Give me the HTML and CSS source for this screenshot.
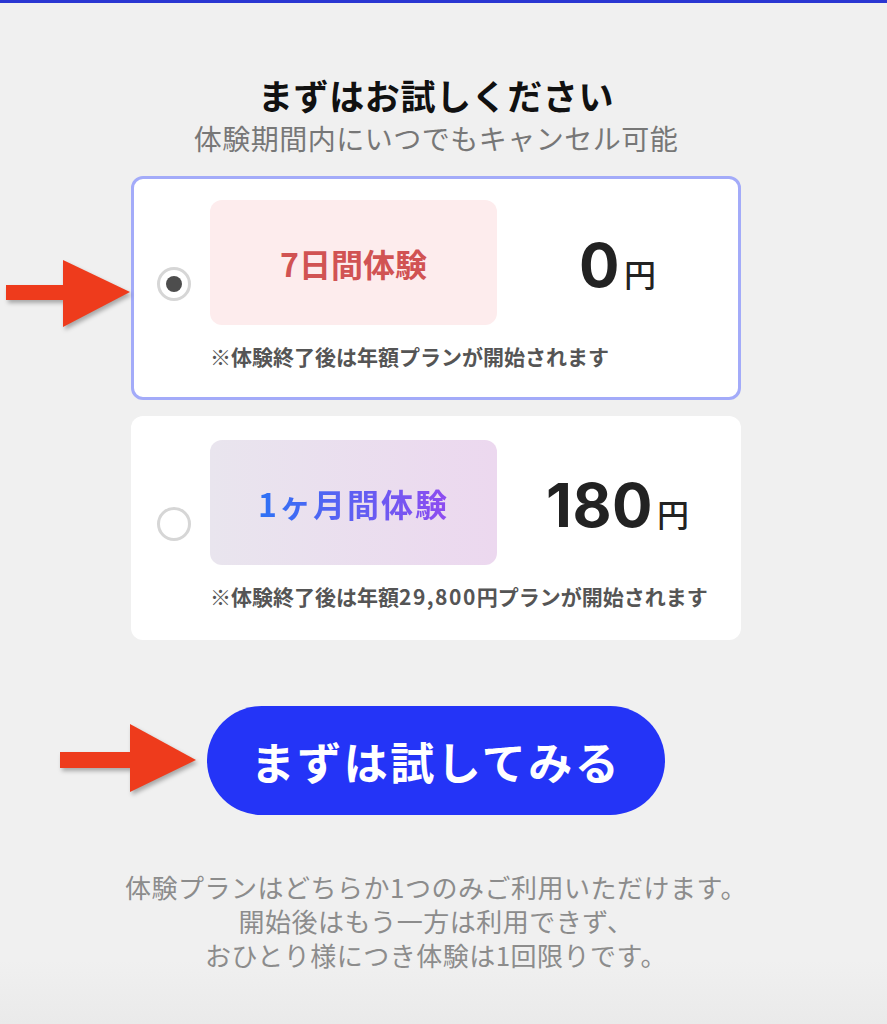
FILE: index.html
```html
<!DOCTYPE html>
<html lang="ja">
<head>
    <meta charset="UTF-8">
    <meta name="viewport" content="width=device-width, initial-scale=1.0">
    <title>まずはお試しください</title>
    <link rel="stylesheet" href="styles.css">
</head>
<body>
    <div class="topbar"></div>

    <main class="trial">
        <h1 class="trial-title">まずはお試しください</h1>
        <p class="trial-sub">体験期間内にいつでもキャンセル可能</p>

        <div class="plans">
            <div class="plan plan-selected">
                <div class="plan-radio"><span class="radio radio-checked"></span></div>
                <div class="plan-body">
                    <div class="plan-row">
                        <div class="plan-tag tag-week"><span>7日間体験</span></div>
                        <div class="plan-price"><span class="amount">0</span><span class="yen">円</span></div>
                    </div>
                    <p class="plan-note">※体験終了後は年額プランが開始されます</p>
                </div>
            </div>

            <div class="plan">
                <div class="plan-radio"><span class="radio"></span></div>
                <div class="plan-body">
                    <div class="plan-row">
                        <div class="plan-tag tag-month"><span>1ヶ月間体験</span></div>
                        <div class="plan-price"><span class="amount">180</span><span class="yen">円</span></div>
                    </div>
                    <p class="plan-note">※体験終了後は年額<span class="num">29,800</span>円プランが開始されます</p>
                </div>
            </div>
        </div>

        <button class="start-btn" type="button">まずは試してみる</button>

        <p class="disclaimer">
            体験プランはどちらか1つのみご利用いただけます。<br>
            開始後はもう一方は利用できず、<br>
            おひとり様につき体験は1回限りです。
        </p>

        <!-- pointer arrows drawn over the page -->
        <svg class="arrow arrow-plan" width="140" height="80" viewBox="0 0 140 80">
            <rect x="6" y="30" width="60" height="15" fill="#ee3b1c"/>
            <polygon points="63,5 130,37 63,72" fill="#ee3b1c"/>
        </svg>
        <svg class="arrow arrow-btn" width="150" height="80" viewBox="0 0 150 80">
            <rect x="5" y="32" width="73" height="16" fill="#ee3b1c"/>
            <polygon points="75,4 141,40 75,72" fill="#ee3b1c"/>
        </svg>
    </main>
</body>
</html>
```

FILE: styles.css
```css
* {
    box-sizing: border-box;
    margin: 0;
    padding: 0;
}

body {
    min-height: 1024px;
    background: linear-gradient(#f0f0f0 0, #f0f0f0 960px, #eaeaea 1024px);
    font-family: "Noto Sans CJK JP", "Noto Sans", sans-serif;
    color: #222;
}

.topbar {
    height: 3px;
    background-color: #2a36d2;
}

.trial {
    position: relative;
    width: 610px;
    margin-left: 131px;
    padding-top: 70px;
    text-align: center;
}

.trial-title {
    font-size: 35px;
    line-height: 44px;
    font-weight: 700;
    letter-spacing: 0.6px;
    color: #111;
}

.trial-sub {
    margin-top: 3px;
    font-size: 28px;
    line-height: 36px;
    letter-spacing: 0.5px;
    color: #777;
}

.plans {
    display: flex;
    flex-direction: column;
    gap: 16px;
    margin-top: 20px;
}

.plan {
    display: flex;
    align-items: center;
    background: white;
    border: 3px solid transparent;
    border-radius: 12px;
    padding: 21px 0 29px;
    text-align: left;
}

.plan-selected {
    border-color: #a3abf9;
}

.plan-radio {
    width: 76px;
    flex-shrink: 0;
    display: flex;
    justify-content: center;
    padding-left: 4px;
}

.radio {
    width: 34px;
    height: 34px;
    border: 3px solid #d6d6d6;
    border-radius: 50%;
    display: flex;
    align-items: center;
    justify-content: center;
}

.radio-checked::after {
    content: "";
    width: 16px;
    height: 16px;
    border-radius: 50%;
    background-color: #4d4d4d;
}

.plan-body {
    flex: 1;
}

.plan-row {
    display: flex;
    align-items: center;
}

.plan-tag {
    width: 287px;
    height: 125px;
    border-radius: 12px;
    display: flex;
    align-items: center;
    justify-content: center;
    font-size: 32px;
    font-weight: 700;
}

.tag-week {
    background-color: #fdeced;
    color: #d15353;
}

.tag-month {
    background: linear-gradient(90deg, #e9e5ee, #ecd8ef);
    letter-spacing: 2px;
}

.tag-month span {
    background: linear-gradient(90deg, #2d72f5, #8f4cf0);
    -webkit-background-clip: text;
    background-clip: text;
    color: transparent;
}

.plan-price {
    flex: 1;
    display: flex;
    align-items: baseline;
    justify-content: center;
    padding-top: 6px;
    color: #222;
}

.amount {
    font-family: Inter, "Noto Sans", sans-serif;
    font-size: 60px;
    font-weight: 700;
    letter-spacing: 0.5px;
    line-height: 1;
}

.yen {
    margin-left: 4px;
    font-size: 32px;
    font-weight: 500;
}

.plan-note {
    margin-top: 19px;
    font-size: 21px;
    line-height: 24px;
    font-weight: 700;
    color: #555;
}

.plan-note .num {
    letter-spacing: 1.5px;
}

.start-btn {
    display: block;
    width: 458px;
    height: 109px;
    margin: 66px auto 0;
    border: none;
    border-radius: 55px;
    background-color: #2434f7;
    color: white;
    font-family: "Noto Sans CJK JP", sans-serif;
    font-size: 44px;
    font-weight: 700;
    letter-spacing: 2.5px;
    cursor: pointer;
}

.disclaimer {
    margin: 55px -100px 0;
    font-size: 26px;
    line-height: 34px;
    letter-spacing: 0.5px;
    color: #8c8c8c;
}

.arrow {
    position: absolute;
    filter: drop-shadow(2px 3px 2px rgba(0, 0, 0, 0.3));
}

.arrow-plan {
    left: -131px;
    top: 252px;
}

.arrow-btn {
    left: -76px;
    top: 717px;
}
```
